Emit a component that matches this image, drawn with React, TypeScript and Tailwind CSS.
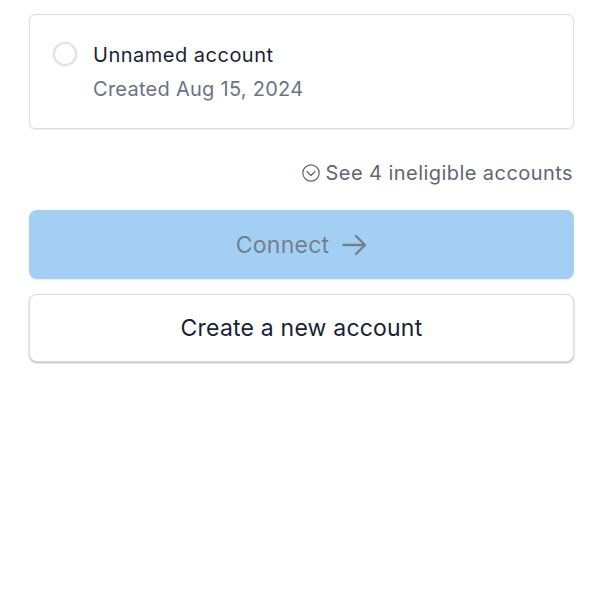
export default function App() {
  return (
    <div className="min-h-[609px] bg-white px-[29px] pt-[14px] font-['Inter',sans-serif]">
      {/* Account card */}
      <div className="flex h-[115px] items-start rounded-[6px] border border-[#dcdde1] bg-white pl-[23px] pt-[27px] shadow-[0_1px_1px_rgba(60,66,87,0.08)]">
        <div className="h-[24px] w-[24px] rounded-full border-2 border-[#e1e2e5] bg-white shadow-[0_0_2px_rgba(60,66,87,0.15)]"></div>
        <div className="ml-[16px]">
          <div className="text-[20px] leading-[26px] tracking-[0.5px] text-[#1a1f36]">Unnamed account</div>
          <div className="mt-[8px] text-[20px] leading-[26px] tracking-[0.27px] text-[#697386]">Created Aug 15, 2024</div>
        </div>
      </div>

      <div className="mt-[31px] flex h-[26px] items-center justify-end gap-[6px] pr-[1px] text-[20px] tracking-[0.44px] text-[#5f6675]">
        <svg width="18" height="18" viewBox="0 0 18 18" fill="none" stroke="#5f6675" strokeWidth="1.2" strokeLinecap="round" strokeLinejoin="round">
          <circle cx="9" cy="9" r="8.2" />
          <path d="M5 7.5 9 11.5l4-4" />
        </svg>
        <span>See 4 ineligible accounts</span>
      </div>

      <button className="mt-[24px] flex h-[69px] w-full items-center justify-center gap-[13px] rounded-[8px] bg-[#a4cff5] pt-[1px] text-[23px] tracking-[0.25px] text-[#737f8c] shadow-[0_1px_2px_rgba(60,66,87,0.12)]">
        <span>Connect</span>
        <svg width="25" height="22" viewBox="0 0 25 22" fill="none" stroke="#737f8c" strokeWidth="2.4" strokeLinecap="round" strokeLinejoin="round">
          <path d="M1.5 11h21.5M14 2l9 9-9 9" />
        </svg>
      </button>

      <button className="mt-[15px] flex h-[68px] w-full items-center justify-center rounded-[8px] border border-[#dcdde1] bg-white pt-[1px] text-[23px] tracking-[0.2px] text-[#1a1f36] shadow-[0_1px_2px_rgba(60,66,87,0.4)]">
        Create a new account
      </button>
    </div>
  );
}
